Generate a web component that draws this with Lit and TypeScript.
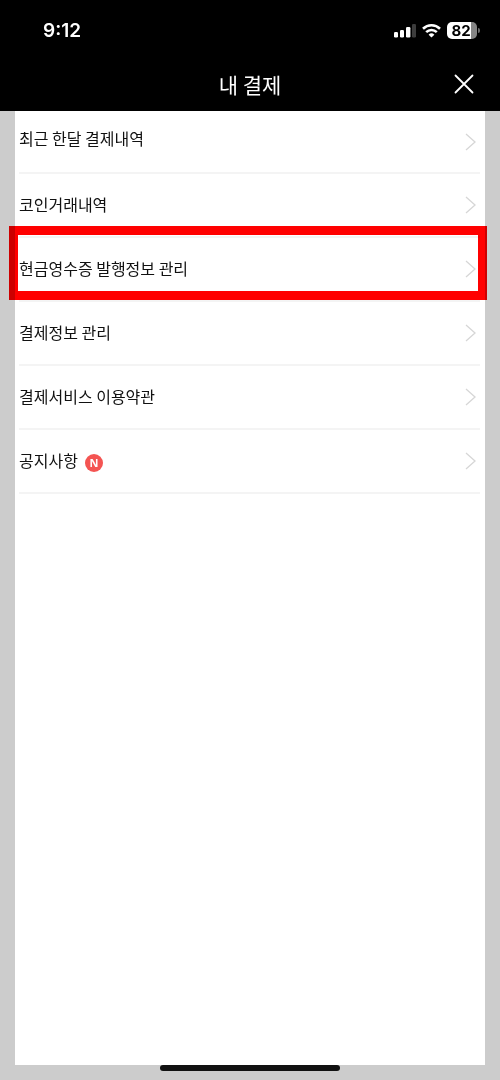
import { LitElement, html, css } from "lit";
import { customElement, property } from "lit/decorators.js";
import { classMap } from "lit/directives/class-map.js";

interface MenuItem {
  label: string;
  highlighted?: boolean;
  isNew?: boolean;
}

const MENU: MenuItem[] = [
  { label: "최근 한달 결제내역" },
  { label: "코인거래내역" },
  { label: "현금영수증 발행정보 관리", highlighted: true },
  { label: "결제정보 관리" },
  { label: "결제서비스 이용약관" },
  { label: "공지사항", isNew: true },
];

@customElement("status-bar")
export class StatusBar extends LitElement {
  @property() time = "9:12";
  @property({ type: Number }) battery = 82;

  static styles = css`
    :host {
      display: flex;
      align-items: center;
      justify-content: space-between;
      height: 60px;
      padding: 0 20px 0 43px;
      box-sizing: border-box;
      color: #fff;
      font-family: Inter, "Liberation Sans", sans-serif;
    }
    .time {
      padding-top: 2px;
      font-size: 19px;
      line-height: 24px;
      font-weight: 600;
    }
    .icons {
      display: flex;
      align-items: center;
      gap: 6px;
    }
    svg {
      display: block;
    }
    .battery {
      display: flex;
      align-items: center;
      gap: 1px;
    }
    .cell {
      width: 30px;
      height: 17px;
      padding-right: 2px;
      box-sizing: border-box;
      border-radius: 5px;
      background: linear-gradient(to right, #fff 80%, #858585 80%);
      color: #000;
      font-size: 15px;
      line-height: 17px;
      font-weight: 700;
      text-align: center;
    }
    .tip {
      width: 2px;
      height: 5px;
      border-radius: 0 2px 2px 0;
      background: #6a6a6a;
    }
  `;

  render() {
    return html`
      <span class="time">${this.time}</span>
      <div class="icons">
        <svg width="23" height="16" viewBox="0 0 23 16" aria-hidden="true">
          <rect x="1" y="10" width="4" height="5.5" rx="1.2" fill="#fff" />
          <rect x="7" y="8" width="4" height="7.5" rx="1.2" fill="#fff" />
          <rect x="13" y="5" width="4.4" height="10.5" rx="1.2" fill="#fff" />
          <rect x="19" y="2" width="4" height="13.5" rx="1.2" fill="#3c3c3c" />
        </svg>
        <svg width="19" height="15" viewBox="0 0 19 15" aria-hidden="true">
          <g fill="none" stroke="#fff" stroke-width="2.6">
            <path d="M1 5.7a12.2 12.2 0 0 1 17 0" />
            <path d="M4.2 9.1a7.6 7.6 0 0 1 10.6 0" />
          </g>
          <path d="M9.5 14.6 6.6 11.7a4.2 4.2 0 0 1 5.8 0z" fill="#fff" />
        </svg>
        <div class="battery">
          <div class="cell">${this.battery}</div>
          <div class="tip"></div>
        </div>
      </div>
    `;
  }
}

@customElement("menu-row")
export class MenuRow extends LitElement {
  @property({ attribute: false }) item!: MenuItem;
  @property({ type: Boolean }) first = false;

  static styles = css`
    :host {
      display: block;
      position: relative;
    }
    .row {
      display: flex;
      align-items: center;
      justify-content: space-between;
      width: 100%;
      margin: 0;
      padding: 0 4px 0 0;
      border: 0;
      border-bottom: 2px solid #f4f4f4;
      background: none;
      color: #111;
      font: inherit;
      text-align: left;
      cursor: pointer;
    }
    .label {
      display: flex;
      align-items: flex-end;
      gap: 7px;
      padding: 18px 0 20px;
      font-size: 16px;
      line-height: 24px;
    }
    .first .label {
      padding: 15px 0 22px;
    }
    .badge {
      width: 18px;
      height: 18px;
      border-radius: 50%;
      background: #f45452;
      color: #fff;
      font-family: "Open Sans", sans-serif;
      font-size: 11px;
      line-height: 18px;
      font-weight: 700;
      text-align: center;
    }
    .frame {
      position: absolute;
      inset: -12px -7px 2px -10px;
      border: 9px solid #f00;
      mix-blend-mode: multiply;
      pointer-events: none;
    }
    svg {
      display: block;
    }
  `;

  render() {
    const { label, isNew, highlighted } = this.item;
    return html`
      <button class=${classMap({ row: true, first: this.first })}>
        <span class="label">
          ${label}${isNew ? html`<span class="badge">N</span>` : ""}
        </span>
        <svg width="11" height="18" viewBox="0 0 11 18" aria-hidden="true">
          <path d="M1 1 10 9 1 17" fill="none" stroke="#d6d6d6" stroke-width="1.3" />
        </svg>
      </button>
      ${highlighted ? html`<div class="frame"></div>` : ""}
    `;
  }
}

@customElement("app-root")
export class AppRoot extends LitElement {
  static styles = css`
    :host {
      display: flex;
      flex-direction: column;
      min-height: 100vh;
      background: #ccc;
      font-family: "Noto Sans CJK KR", sans-serif;
    }
    .top {
      background: #000;
      color: #fff;
    }
    .title-bar {
      display: grid;
      grid-template-columns: 1fr auto 1fr;
      align-items: center;
      height: 51px;
      padding: 0 26px 3px;
      box-sizing: border-box;
    }
    h1 {
      grid-column: 2;
      margin: 0;
      font-size: 21px;
      line-height: 30px;
      font-weight: 400;
    }
    .close {
      justify-self: end;
      padding: 0;
      border: 0;
      background: none;
      cursor: pointer;
    }
    .close svg {
      display: block;
    }
    .panel {
      flex: 1;
      margin: 0 15px;
      padding: 0 5px 0 4px;
      background: #fff;
    }
    .home {
      display: flex;
      justify-content: center;
      height: 15px;
    }
    .indicator {
      width: 36%;
      height: 6px;
      border-radius: 3px;
      background: #111;
    }
  `;

  render() {
    return html`
      <header class="top">
        <status-bar></status-bar>
        <div class="title-bar">
          <h1>내 결제</h1>
          <button class="close" aria-label="닫기">
            <svg width="20" height="20" viewBox="0 0 20 20" aria-hidden="true">
              <path d="M1.5 1.5 18.5 18.5M18.5 1.5 1.5 18.5" fill="none" stroke="#fff" stroke-width="1.8" stroke-linecap="round" />
            </svg>
          </button>
        </div>
      </header>
      <nav class="panel">
        ${MENU.map((item, i) => html`<menu-row .item=${item} ?first=${i === 0}></menu-row>`)}
      </nav>
      <footer class="home"><div class="indicator"></div></footer>
    `;
  }
}
